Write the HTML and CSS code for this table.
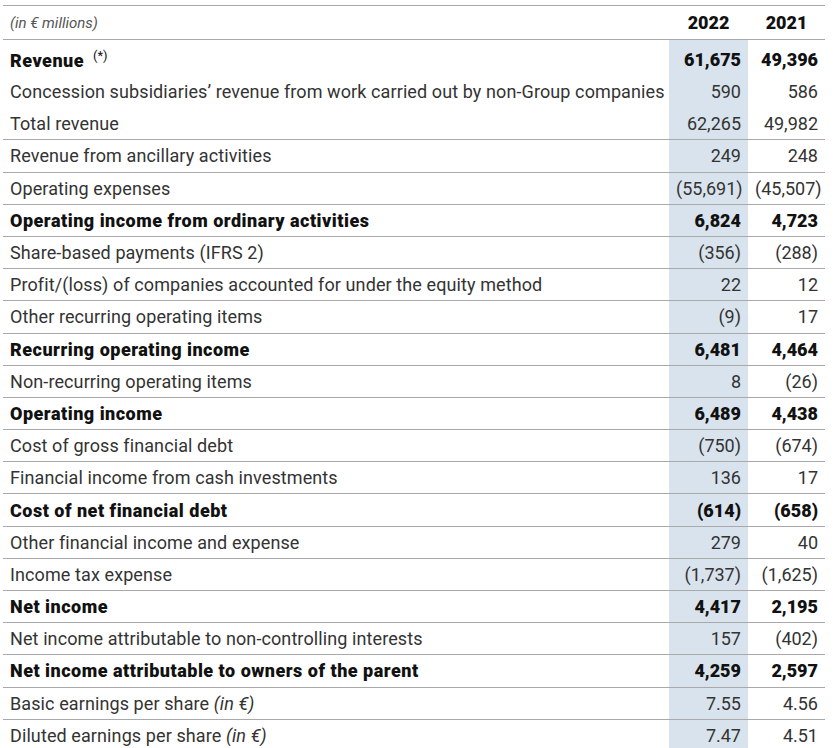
FILE: index.html
```html
<!DOCTYPE html>
<html lang="en">
<head>
  <meta charset="UTF-8">
  <title>Income statement</title>
  <link rel="stylesheet" href="styles.css">
</head>
<body>
<table class="fin">
  <colgroup>
    <col class="c-label">
    <col class="c-y22">
    <col class="c-y21">
  </colgroup>
  <thead>
    <tr class="head">
      <th class="label"><i>(in € millions)</i></th>
      <th class="num">2022</th>
      <th class="num">2021</th>
    </tr>
  </thead>
  <tbody>
    <tr class="bold first nosep"><td class="label">Revenue <sup>(*)</sup></td><td class="num cur">61,675</td><td class="num">49,396</td></tr>
    <tr class="nosep"><td class="label">Concession subsidiaries’ revenue from work carried out by non-Group companies</td><td class="num cur">590</td><td class="num">586</td></tr>
    <tr><td class="label">Total revenue</td><td class="num cur">62,265</td><td class="num">49,982</td></tr>
    <tr><td class="label">Revenue from ancillary activities</td><td class="num cur">249</td><td class="num">248</td></tr>
    <tr><td class="label">Operating expenses</td><td class="num cur">(55,691)</td><td class="num">(45,507)</td></tr>
    <tr class="bold"><td class="label">Operating income from ordinary activities</td><td class="num cur">6,824</td><td class="num">4,723</td></tr>
    <tr><td class="label">Share-based payments (IFRS 2)</td><td class="num cur">(356)</td><td class="num">(288)</td></tr>
    <tr><td class="label">Profit/(loss) of companies accounted for under the equity method</td><td class="num cur">22</td><td class="num">12</td></tr>
    <tr><td class="label">Other recurring operating items</td><td class="num cur">(9)</td><td class="num">17</td></tr>
    <tr class="bold"><td class="label">Recurring operating income</td><td class="num cur">6,481</td><td class="num">4,464</td></tr>
    <tr><td class="label">Non-recurring operating items</td><td class="num cur">8</td><td class="num">(26)</td></tr>
    <tr class="bold"><td class="label">Operating income</td><td class="num cur">6,489</td><td class="num">4,438</td></tr>
    <tr><td class="label">Cost of gross financial debt</td><td class="num cur">(750)</td><td class="num">(674)</td></tr>
    <tr><td class="label">Financial income from cash investments</td><td class="num cur">136</td><td class="num">17</td></tr>
    <tr class="bold"><td class="label">Cost of net financial debt</td><td class="num cur">(614)</td><td class="num">(658)</td></tr>
    <tr><td class="label">Other financial income and expense</td><td class="num cur">279</td><td class="num">40</td></tr>
    <tr><td class="label">Income tax expense</td><td class="num cur">(1,737)</td><td class="num">(1,625)</td></tr>
    <tr class="bold"><td class="label">Net income</td><td class="num cur">4,417</td><td class="num">2,195</td></tr>
    <tr><td class="label">Net income attributable to non-controlling interests</td><td class="num cur">157</td><td class="num">(402)</td></tr>
    <tr class="bold"><td class="label">Net income attributable to owners of the parent</td><td class="num cur">4,259</td><td class="num">2,597</td></tr>
    <tr><td class="label">Basic earnings per share <i>(in €)</i></td><td class="num cur">7.55</td><td class="num">4.56</td></tr>
    <tr><td class="label">Diluted earnings per share <i>(in €)</i></td><td class="num cur">7.47</td><td class="num">4.51</td></tr>
  </tbody>
</table>
</body>
</html>
```

FILE: styles.css
```css
body {
  margin: 5px 0 0 3px;
  font-family: Roboto, "Liberation Sans", sans-serif;
  font-size: 18px;
  color: #333;
  background: #fff;
}
.fin {
  border-collapse: collapse;
  table-layout: fixed;
  width: 822px;
}
.c-label {
  width: 666px;
}
.c-y22 {
  width: 79px;
}
.c-y21 {
  width: 77px;
}
.fin tr {
  height: 32.2px;
  border-bottom: 1px solid #a9a9a9;
}
.fin tr.nosep {
  border-bottom: none;
}
.fin .head {
  height: 34px;
  border-top: 1px solid #a9a9a9;
}
.fin th {
  font-weight: 900;
  color: #111;
}
.fin .head .label {
  font-size: 15px;
  font-weight: normal;
  color: #555;
}
.fin .head .num {
  text-align: center;
}
.fin td, .fin th {
  padding: 0 7px;
  white-space: nowrap;
}
.fin .label {
  text-align: left;
}
.fin td.label {
  letter-spacing: 0.1px;
}
.fin .num {
  text-align: right;
}
.fin .cur {
  background: #d9e3ed;
}
.fin tr.first {
  height: 36px;
}
.fin tr.first td {
  padding-top: 4px;
}
.fin tr.bold td {
  font-weight: 900;
  color: #111;
}
.fin tr.bold td.label {
  letter-spacing: 0.5px;
}
.fin sup {
  font-size: 13px;
  font-weight: normal;
  letter-spacing: 0;
  margin-left: 4px;
}
```
